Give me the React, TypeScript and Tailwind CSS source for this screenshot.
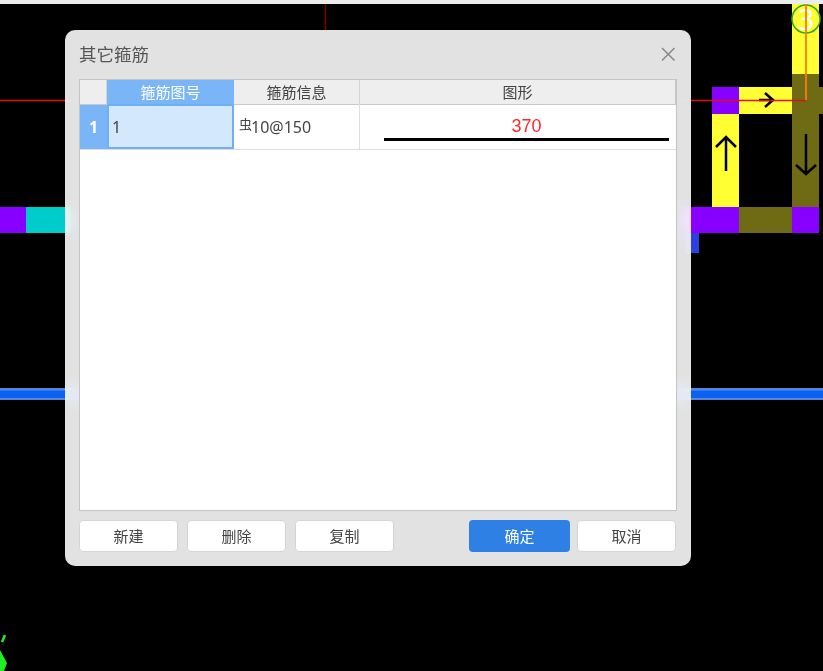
const FONT = "font-['Noto_Sans','Noto_Sans_CJK_SC',sans-serif]";

function CadCanvas() {
  return (
    <svg className="absolute inset-0" width="823" height="671" viewBox="0 0 823 671" fill="none">
      <rect width="823" height="671" fill="#000000" />
      <rect width="823" height="4" fill="#ececec" />

      <rect x="0" y="207" width="26" height="26" fill="#8800ff" />
      <rect x="26" y="207" width="45" height="26" fill="#00cccc" />
      <rect x="0" y="388" width="823" height="12" fill="#5f80c8" />
      <rect x="0" y="389" width="823" height="10" fill="#4f8cf2" />
      <rect x="0" y="390.5" width="823" height="7.5" fill="#0c62f0" />
      <rect x="685" y="233" width="14" height="20" fill="#2c3fe0" />

      <rect x="792" y="4" width="27" height="70" fill="#ffff33" />
      <rect x="792" y="74" width="27" height="133" fill="#6f6b14" />
      <rect x="819" y="87" width="4" height="27" fill="#6f6b14" />
      <rect x="739" y="87" width="53" height="27" fill="#ffff33" />
      <rect x="712" y="87" width="27" height="27" fill="#8800ff" />
      <rect x="712" y="114" width="27" height="93" fill="#ffff33" />
      <rect x="680" y="207" width="59" height="26" fill="#8800ff" />
      <rect x="739" y="207" width="53" height="26" fill="#6f6b14" />
      <rect x="792" y="207" width="27" height="26" fill="#8800ff" />

      <path d="M726 171V138M716 147l10-10 10 10" stroke="#000" strokeWidth="2.5" />
      <path d="M806 134v40M796 165l10 9 10-9" stroke="#000" strokeWidth="2.5" />
      <path d="M759 100h15M765 93l8 7-8 7" stroke="#000" strokeWidth="2.5" />

      <circle cx="806" cy="19" r="14" fill="#ffff33" stroke="#2fa52f" strokeWidth="1.5" />
      <text x="806" y="30" textAnchor="middle" fontSize="29" fill="#ffffff" fontFamily="Noto Sans">3</text>

      <path d="M0 100.5H806" stroke="#e01010" strokeWidth="1.5" />
      <path d="M806 4V100" stroke="#ff7a10" strokeWidth="1.8" />
      <path d="M325.5 4V30" stroke="#7a0000" strokeWidth="1.5" />

      <path d="M5 635L2 642" stroke="#22ee22" strokeWidth="2.5" />
      <path d="M0 650L7 663L4 671H0Z" fill="#22ee22" />
    </svg>
  );
}

function DialogButton({ label, primary }: { label: string; primary?: boolean }) {
  return (
    <button
      type="button"
      className={
        primary
          ? "h-[32px] w-[101px] rounded-[4px] bg-[#2e80e4] text-[15px] text-white"
          : "h-[32px] w-[99px] rounded-[4px] border border-[#d4d4d4] bg-white text-[15px] text-[#444444]"
      }
    >
      {label}
    </button>
  );
}

function RebarTable() {
  return (
    <div className="h-[432px] border border-[#c4c4c4] bg-white">
      <div className="grid h-[25px] grid-cols-[27px_127px_126px_1fr] border-b border-[#c8c8c8] bg-[#eeeeee] text-center text-[15px] leading-[25px] text-[#444444]">
        <div className="border-r border-[#d4d4d4]" />
        <div className="bg-[#7ab6f7] text-white">箍筋图号</div>
        <div className="border-r border-[#d4d4d4]">箍筋信息</div>
        <div className="border-r border-[#c8c8c8]">图形</div>
      </div>
      <div className="grid h-[45px] grid-cols-[27px_127px_126px_1fr] border-b border-[#dddddd] text-[16px] text-[#444444]">
        <div className="flex items-center justify-center bg-[#7ab6f7] font-bold text-white">1</div>
        <div className="-mt-[1px] flex items-center border-2 border-[#6fb0f5] bg-[#d4e8fd] pl-[3px]">1</div>
        <div className="-mt-[1px] flex items-center border-r border-[#dddddd] pl-[5px]">
          <span className="-mt-[4px] text-[13px] leading-none">虫</span>
          <span className="-ml-[1px]">10@150</span>
        </div>
        <div className="flex flex-col items-center pl-[24px] pr-[7px] pt-[10px]">
          <span className="font-['Liberation_Sans',sans-serif] text-[18px] leading-[22px] text-[#ff2828]">370</span>
          <div className="mt-[1px] h-[2.5px] w-full bg-black" />
        </div>
      </div>
    </div>
  );
}

export default function App() {
  return (
    <div className={`relative h-[671px] w-[823px] overflow-hidden ${FONT}`}>
      <CadCanvas />
      <div className="absolute left-[65px] top-[30px] flex h-[536px] w-[626px] flex-col rounded-[10px] bg-white/[0.885] px-[14px] backdrop-blur-sm">
        <div className="flex h-[49px] items-center justify-between pr-[1px]">
          <span className="text-[17.5px] text-[#555555]">其它箍筋</span>
          <svg width="16" height="16" viewBox="0 0 16 16" fill="none" className="-mt-[1px]">
            <path d="M2 2l12.5 12.5M14.5 2L2 14.5" stroke="#888888" strokeWidth="1.5" />
          </svg>
        </div>
        <RebarTable />
        <div className="mt-[9px] flex items-center justify-between pr-[1px]">
          <div className="flex gap-[9px]">
            <DialogButton label="新建" />
            <DialogButton label="删除" />
            <DialogButton label="复制" />
          </div>
          <div className="flex gap-[7px]">
            <DialogButton label="确定" primary />
            <DialogButton label="取消" />
          </div>
        </div>
      </div>
    </div>
  );
}
